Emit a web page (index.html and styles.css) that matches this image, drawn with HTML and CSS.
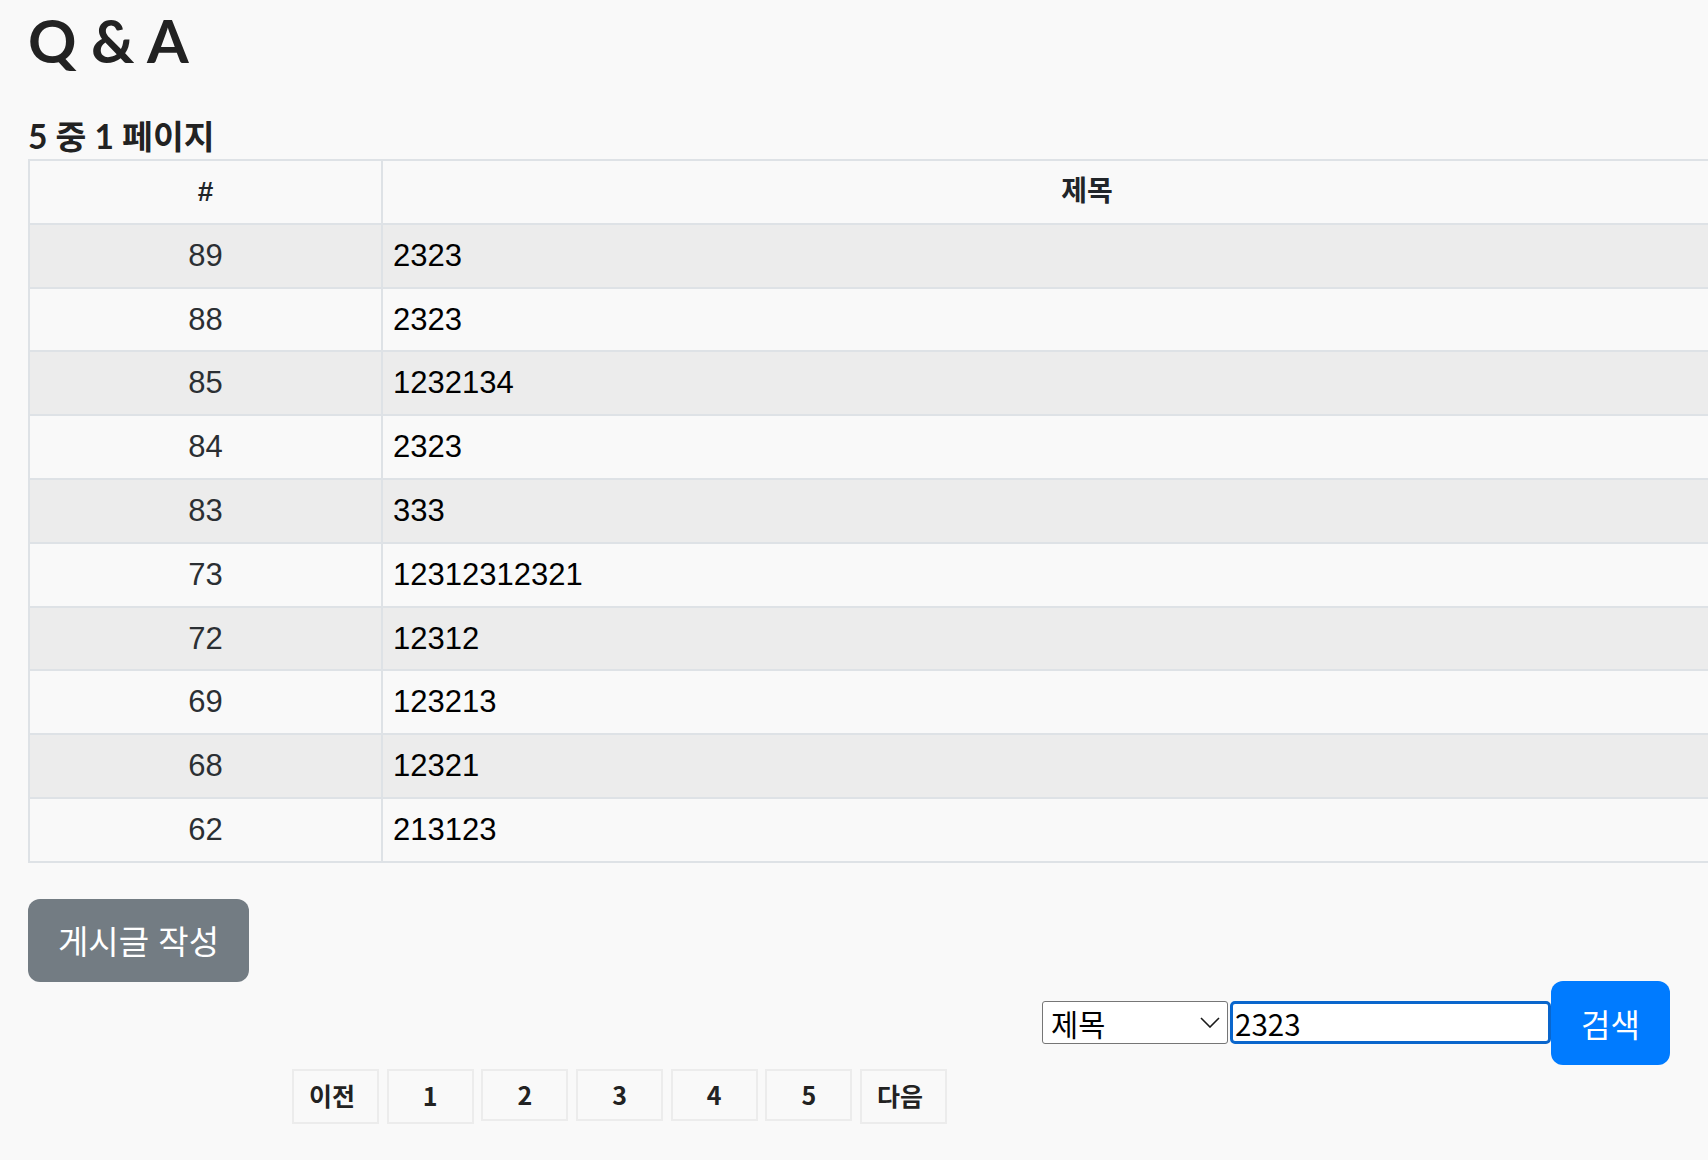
FILE: index.html
```html
<!DOCTYPE html>
<html lang="ko">
<head>
<meta charset="utf-8">
<title>Q &amp; A</title>
<link rel="stylesheet" href="styles.css">
</head>
<body>
<main class="page">
  <h1 class="title">Q &amp; A</h1>
  <h2 class="page-info">5 중 1 페이지</h2>
  <table class="board">
    <thead>
      <tr><th class="col-num">#</th><th class="col-subject">제목</th></tr>
    </thead>
    <tbody>
      <tr class="stripe"><td class="num">89</td><td class="subject">2323</td></tr>
      <tr><td class="num">88</td><td class="subject">2323</td></tr>
      <tr class="stripe"><td class="num">85</td><td class="subject">1232134</td></tr>
      <tr><td class="num">84</td><td class="subject">2323</td></tr>
      <tr class="stripe"><td class="num">83</td><td class="subject">333</td></tr>
      <tr><td class="num">73</td><td class="subject">12312312321</td></tr>
      <tr class="stripe"><td class="num">72</td><td class="subject">12312</td></tr>
      <tr><td class="num">69</td><td class="subject">123213</td></tr>
      <tr class="stripe"><td class="num">68</td><td class="subject">12321</td></tr>
      <tr><td class="num">62</td><td class="subject">213123</td></tr>
    </tbody>
  </table>
  <div class="actions">
    <a class="btn btn-write" href="#">게시글 작성</a>
  </div>
  <form class="search">
    <div class="select-wrap">
      <select class="search-type"><option>제목</option></select>
      <svg class="chevron" width="20" height="11" viewBox="0 0 20 11"><polyline points="1,1 10,10 19,1" fill="none" stroke="#1a1a1a" stroke-width="1.6"/></svg>
    </div>
    <input class="search-input" type="text" value="2323">
    <button class="btn btn-search" type="button">검색</button>
  </form>
  <nav class="pager">
    <a class="pg tall word" href="#">이전</a>
    <a class="pg tall" href="#">1</a>
    <a class="pg" href="#">2</a>
    <a class="pg" href="#">3</a>
    <a class="pg" href="#">4</a>
    <a class="pg" href="#">5</a>
    <a class="pg tall word" href="#">다음</a>
  </nav>
</main>
</body>
</html>
```
FILE: styles.css
```css
html, body {
  margin: 0;
  padding: 0;
}
body {
  background: #f9f9f9;
  overflow-x: hidden;
  font-family: "Liberation Sans", "Noto Sans CJK KR", sans-serif;
  color: #212529;
}
.page {
  padding: 0 0 0 28px;
}
.title {
  margin: 4px 0 0;
  font-family: Lato, "Noto Sans CJK KR", sans-serif;
  font-weight: 700;
  font-size: 60px;
  line-height: 72px;
  color: #222;
}
.page-info {
  margin: 40px 0 3px;
  font-family: Lato, "Noto Sans CJK KR", sans-serif;
  font-weight: 700;
  font-size: 33.5px;
  line-height: 40px;
  color: #222;
}
.board {
  width: 1765px;
  table-layout: fixed;
  border-collapse: collapse;
  border: 2px solid #dee2e6;
  font-size: 31px;
}
.board th, .board td {
  border: 2px solid #dee2e6;
  padding: 12px 10px;
  line-height: 37.8px;
  height: 37.8px;
}
.board th {
  font-weight: 700;
  text-align: center;
  color: #212529;
  font-family: "Liberation Sans", "Noto Sans CJK KR", sans-serif;
  font-size: 28px;
}
.board .col-num {
  width: 353px;
  box-sizing: border-box;
}
.board tbody tr {
  background: #f9f9f9;
}
.board tbody tr.stripe {
  background: #ececec;
}
.board .num {
  text-align: center;
  color: #2b2f33;
}
.board .subject {
  color: #000;
}
.actions {
  margin-top: 36px;
}
.btn {
  display: inline-block;
  border: 0;
  color: #fff;
  text-decoration: none;
  font-family: "Noto Sans CJK KR", sans-serif;
  font-size: 32px;
  cursor: pointer;
}
.btn-write {
  background: #737c83;
  border-radius: 12px;
  font-size: 33px;
  line-height: 43px;
  padding: 20px 30px;
}
.search {
  display: flex;
  align-items: center;
  justify-content: flex-end;
  padding-right: 38px;
  margin: -1px 0 0;
}
.select-wrap {
  position: relative;
  width: 186px;
  height: 43px;
}
.search-type {
  appearance: none;
  -webkit-appearance: none;
  box-sizing: border-box;
  width: 186px;
  height: 43px;
  border: 1px solid #767676;
  border-radius: 3px;
  background: #fff;
  padding: 0 0 0 8px;
  margin: 0;
  font-family: "Noto Sans CJK KR", sans-serif;
  font-size: 29.5px;
  color: #000;
}
.chevron {
  position: absolute;
  left: 158px;
  top: 16px;
  pointer-events: none;
}
.search-input {
  box-sizing: border-box;
  width: 321px;
  height: 43px;
  margin: 0 0 0 2px;
  border: 3px solid #0a66cc;
  border-radius: 5px;
  background: #fff;
  padding: 0 2px;
  font-family: "Noto Sans CJK KR", sans-serif;
  font-size: 29.5px;
  color: #000;
  outline: none;
}
.btn-search {
  background: #007bff;
  border-radius: 12px;
  line-height: 44px;
  padding: 20px 30px;
}
.pager {
  display: flex;
  align-items: flex-start;
  gap: 7.7px;
  margin: 4px 0 0 264px;
}
.pg {
  box-sizing: border-box;
  width: 87px;
  height: 52px;
  border: 2px solid #ececec;
  display: flex;
  align-items: center;
  justify-content: center;
  padding-bottom: 2px;
  font-family: "Noto Sans CJK KR", sans-serif;
  font-weight: 700;
  font-size: 25px;
  color: #222;
  text-decoration: none;
}
.pg.tall {
  height: 55px;
}
.pg.word {
  padding-right: 7px;
}
```
